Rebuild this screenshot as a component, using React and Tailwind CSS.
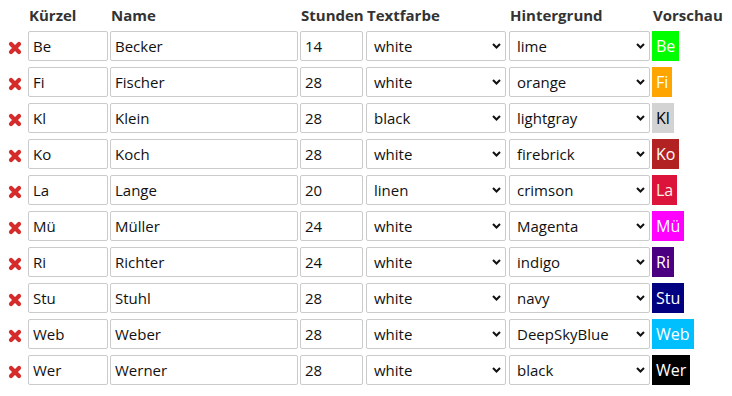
import { useState } from "react";

const ROWS = [
  { kz: "Be", name: "Becker", std: "14", fg: "white", bg: "lime" },
  { kz: "Fi", name: "Fischer", std: "28", fg: "white", bg: "orange" },
  { kz: "Kl", name: "Klein", std: "28", fg: "black", bg: "lightgray" },
  { kz: "Ko", name: "Koch", std: "28", fg: "white", bg: "firebrick" },
  { kz: "La", name: "Lange", std: "20", fg: "linen", bg: "crimson" },
  { kz: "Mü", name: "Müller", std: "24", fg: "white", bg: "Magenta" },
  { kz: "Ri", name: "Richter", std: "24", fg: "white", bg: "indigo" },
  { kz: "Stu", name: "Stuhl", std: "28", fg: "white", bg: "navy" },
  { kz: "Web", name: "Weber", std: "28", fg: "white", bg: "DeepSkyBlue" },
  { kz: "Wer", name: "Werner", std: "28", fg: "white", bg: "black" },
];

// chunky red cross, like the old famfamfam delete icon
const DeleteIcon = () => (
  <svg width="14" height="14" viewBox="0 0 14 14">
    <path
      d="M3 3 L11 11 M11 3 L3 11"
      stroke="#d42b2b"
      strokeWidth="4.2"
      strokeLinecap="round"
    />
    <circle cx="7" cy="7" r="2.6" fill="#d42b2b" />
  </svg>
);

const Field = ({ value, className }) => (
  <div
    className={`h-[30px] border border-[#cbcbcb] rounded-[2px] px-[4px] flex items-center text-[#111] bg-white ${className}`}
  >
    {value}
  </div>
);

const Pick = ({ value, className }) => (
  <div
    className={`h-[30px] border border-[#cbcbcb] rounded-[2px] pl-[7px] pr-[4px] flex items-center justify-between text-[#111] bg-white ${className}`}
  >
    <span>{value}</span>
    <svg width="9" height="6" viewBox="0 0 9 6">
      <path d="M1 1 L4.5 4.5 L8 1" fill="none" stroke="#111" strokeWidth="2" />
    </svg>
  </div>
);

export default function App() {
  const [rows] = useState(ROWS);

  return (
    <div className="w-[732px] h-[396px] bg-white font-['Open_Sans',sans-serif] text-[15px]">
      <div className="grid grid-cols-[28px_82px_190px_66px_143px_143px_1fr] gap-y-[6px]">
        <div />
        {["Kürzel", "Name", "Stunden", "Textfarbe", "Hintergrund", "Vorschau"].map(
          (h) => (
            <div
              key={h}
              className="h-[25px] pt-[5px] pl-[1px] leading-[20px] font-bold text-[#333] whitespace-nowrap"
            >
              {h}
            </div>
          )
        )}
        {rows.map((r) => [
          <div key={r.kz + "x"} className="flex items-center justify-center pt-[4px] pl-[1px]">
            <DeleteIcon />
          </div>,
          <Field key={r.kz + "k"} value={r.kz} className="w-[80px]" />,
          <Field key={r.kz + "n"} value={r.name} className="w-[188px]" />,
          <Field key={r.kz + "s"} value={r.std} className="w-[63px]" />,
          <Pick key={r.kz + "f"} value={r.fg} className="w-[140px]" />,
          <Pick key={r.kz + "b"} value={r.bg} className="w-[141px]" />,
          <div key={r.kz + "p"} className="flex">
            <div
              className="h-[30px] px-[4px] flex items-center text-[16px]"
              style={{ backgroundColor: r.bg, color: r.fg }}
            >
              {r.kz}
            </div>
          </div>,
        ])}
      </div>
    </div>
  );
}
